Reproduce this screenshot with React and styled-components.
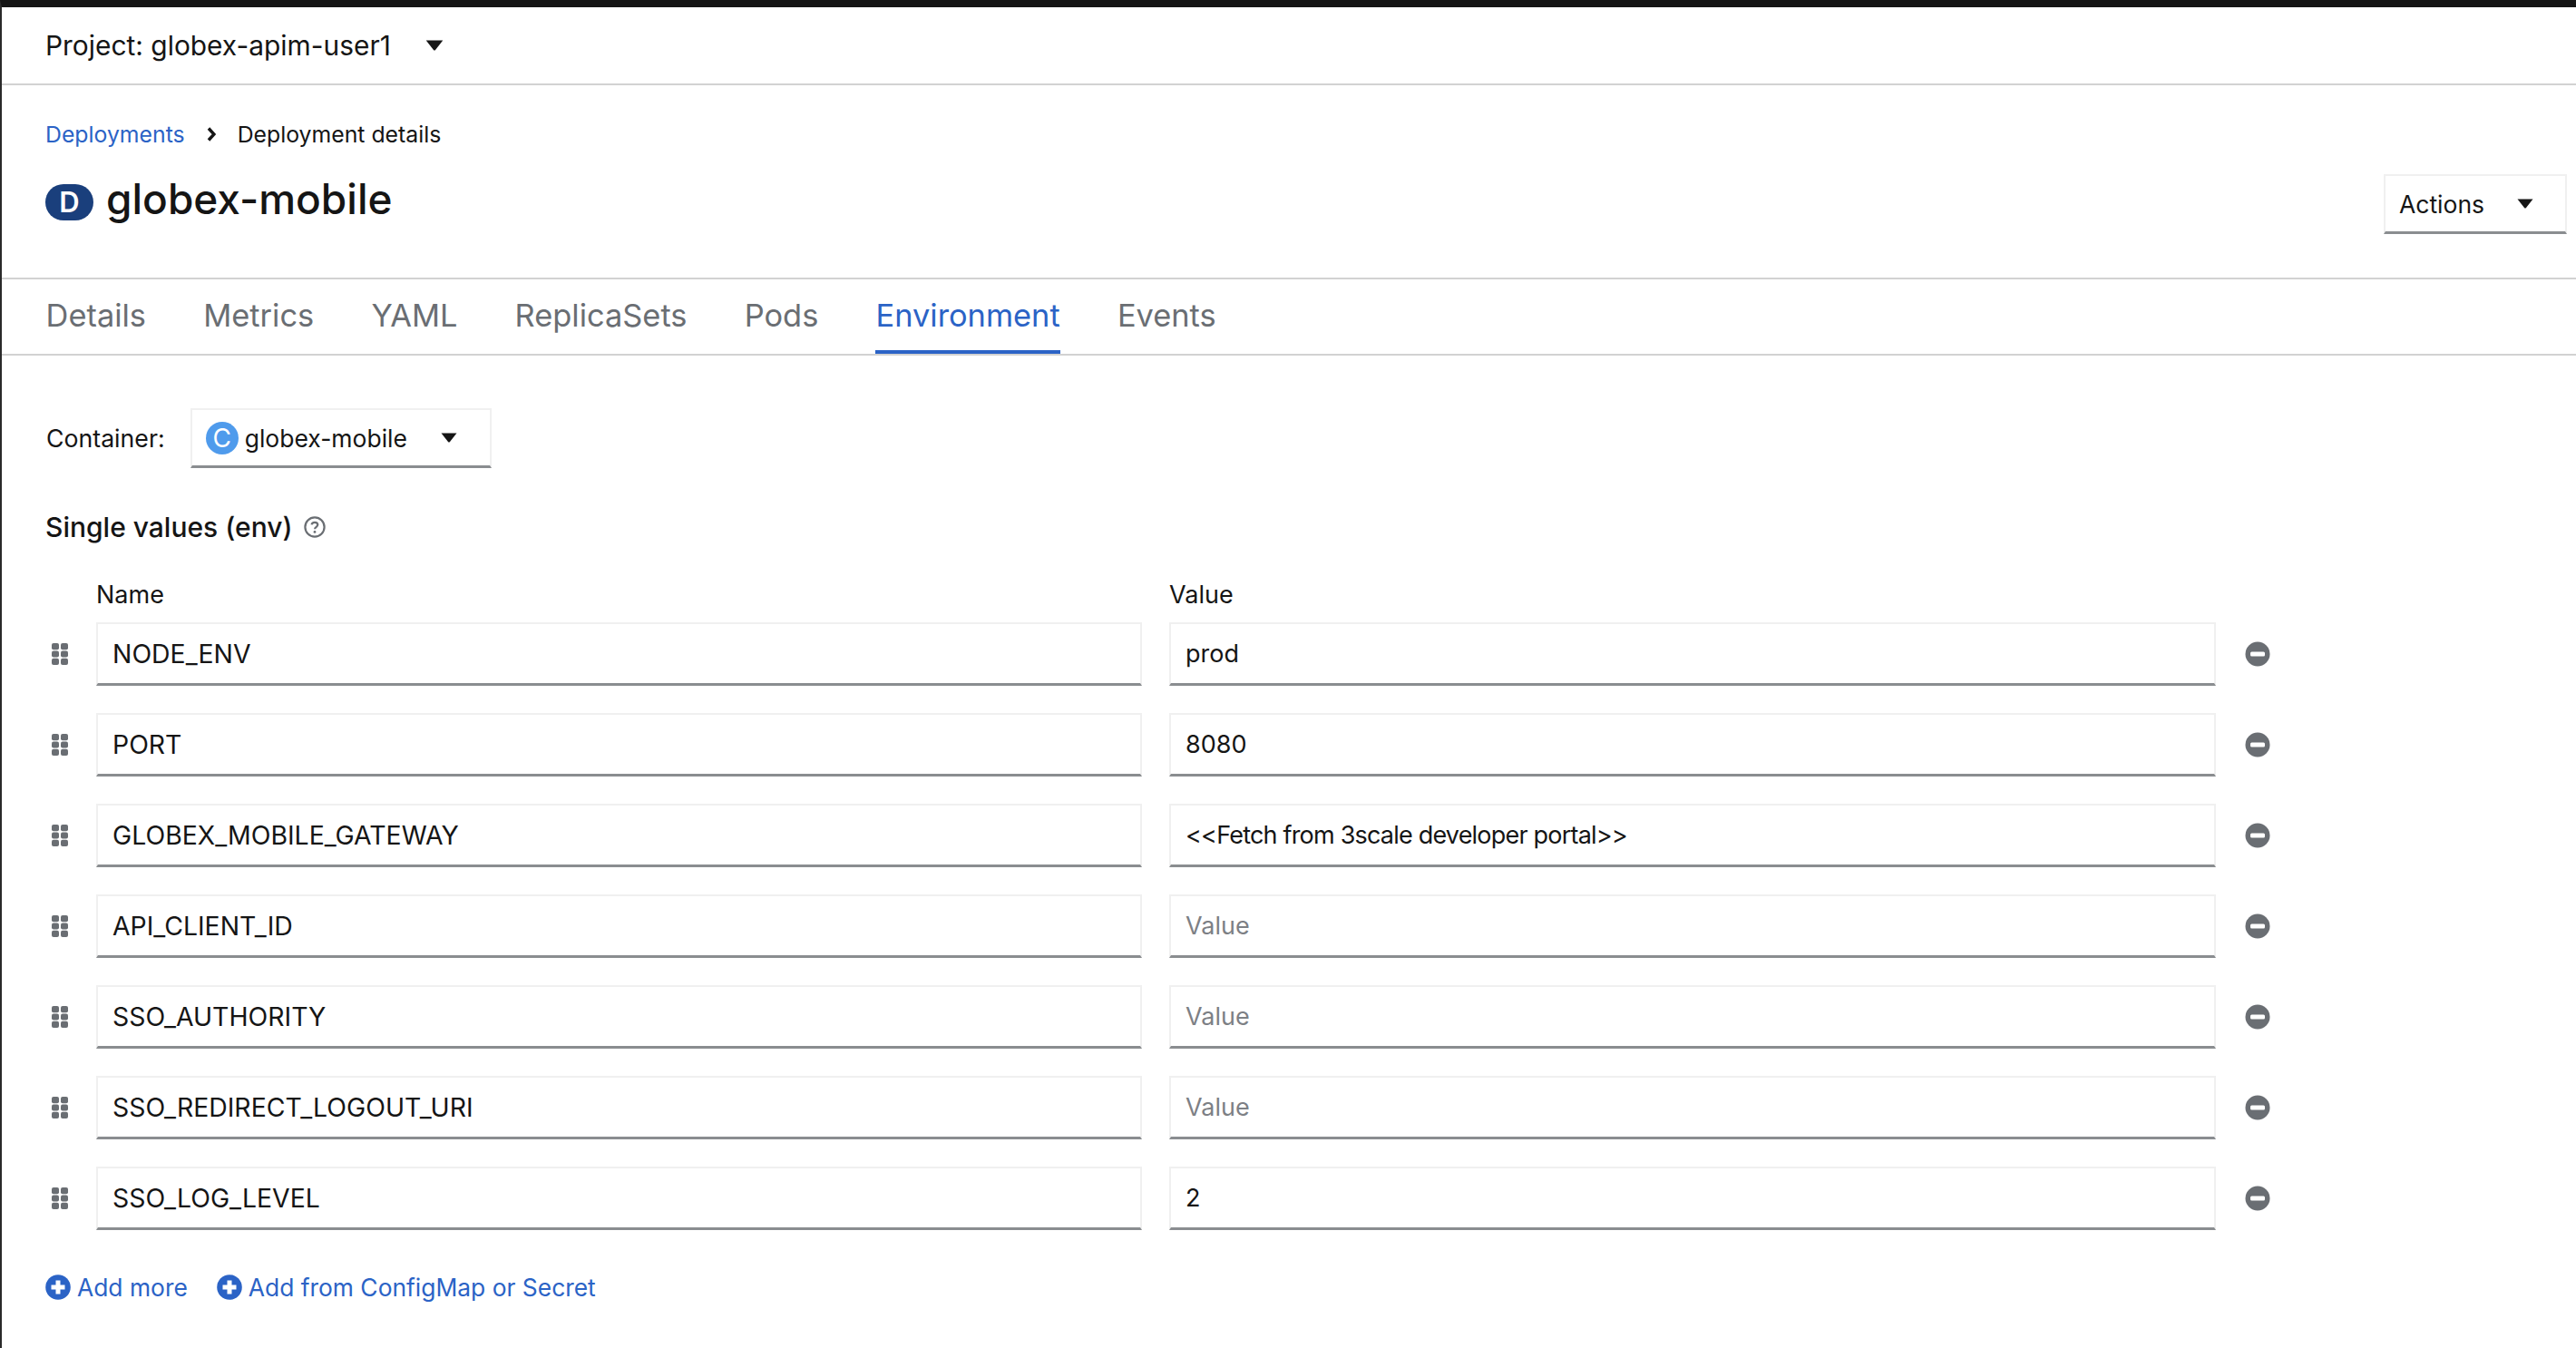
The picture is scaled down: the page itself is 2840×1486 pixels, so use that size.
import React from "react";
import styled, { createGlobalStyle } from "styled-components";

const GlobalStyle = createGlobalStyle`
  html, body {
    margin: 0;
    padding: 0;
    background: #fff;
    color: #151515;
    font-family: "Inter", "Liberation Sans", sans-serif;
  }
  * {
    box-sizing: border-box;
  }
`;

const blue = "#2b63c6";
const gray = "#6a6e73";

const Page = styled.div`
  width: 2840px;
  height: 1486px;
  overflow: hidden;
  border-top: 8px solid #151515;
  border-left: 2px solid #2a2a2a;
  background: #fff;
`;

const ProjectBar = styled.div`
  height: 86px;
  display: flex;
  align-items: center;
  padding-left: 48px;
  border-bottom: 2px solid #d2d2d2;
  font-size: 29.9px;
`;

const ProjectCaret = styled.span`
  margin-left: 38px;
  display: flex;
`;

const Header = styled.div`
  height: 214px;
  padding: 37px 10px 0 48px;
  display: flex;
  justify-content: space-between;
  border-bottom: 2px solid #d2d2d2;
`;

const Breadcrumb = styled.div`
  height: 34px;
  display: flex;
  align-items: center;
  font-size: 24.8px;
`;

const CrumbLink = styled.a`
  color: ${blue};
`;

const CrumbSep = styled.span`
  display: flex;
  margin: 0 24px;
`;

const TitleRow = styled.div`
  display: flex;
  align-items: center;
  margin-top: 24px;
  gap: 14px;
`;

const Badge = styled.span`
  width: 53px;
  height: 40px;
  margin-top: 7px;
  border-radius: 20px;
  background: ${(p) => p.$bg};
  color: #fff;
  display: flex;
  align-items: center;
  justify-content: center;
  font-size: 31px;
  font-weight: 600;
`;

const Title = styled.h1`
  margin: 0;
  font-size: 46px;
  font-weight: 500;
  line-height: 60px;
`;

const SelectButton = styled.button`
  display: flex;
  align-items: center;
  justify-content: space-between;
  width: ${(p) => p.$width}px;
  height: ${(p) => p.$height}px;
  padding: ${(p) => p.$padding};
  background: #fff;
  color: #151515;
  border: 2px solid #f0f0f0;
  border-bottom: 3px solid #8a8d90;
  font-family: inherit;
  font-size: 26.5px;
`;

const ActionsButton = styled(SelectButton)`
  margin-top: 61px;
`;

const Tabs = styled.div`
  height: 84px;
  padding-left: 17px;
  display: flex;
  border-bottom: 2px solid #d2d2d2;
`;

const Tab = styled.a`
  height: 82px;
  margin: 0 31.6px;
  display: flex;
  align-items: center;
  font-size: 34.4px;
  color: ${(p) => (p.$active ? blue : gray)};
  border-bottom: 4px solid ${(p) => (p.$active ? blue : "transparent")};
`;

const Content = styled.div`
  padding: 58px 0 0 49px;
`;

const ContainerRow = styled.div`
  display: flex;
  align-items: center;
  gap: 28px;
  font-size: 26.7px;
`;

const SelectValue = styled.span`
  display: flex;
  align-items: center;
  gap: 7px;
`;

const CircleBadge = styled.span`
  width: 36px;
  height: 36px;
  border-radius: 50%;
  background: #4f9bec;
  color: #fff;
  display: flex;
  align-items: center;
  justify-content: center;
  font-size: 28px;
`;

const SectionTitle = styled.h2`
  margin: 47px 0 0 -1px;
  height: 36px;
  display: flex;
  align-items: center;
  gap: 12px;
  font-size: 30px;
  font-weight: 500;
`;

const Form = styled.div`
  margin-top: 39px;
  display: grid;
  grid-template-columns: 55px 1153px 1184px 92px;
  row-gap: 30px;
  align-items: center;
`;

const ColumnLabel = styled.div`
  font-size: 27px;
  height: 34px;
  margin-bottom: -16px;
  display: flex;
  align-items: center;
`;

const ValueCell = styled.div`
  padding-left: 30px;
`;

const DragHandle = styled.span`
  display: flex;
  padding-left: 6px;
`;

const Field = styled.input`
  display: block;
  width: 100%;
  height: 70px;
  padding: 0 16px;
  background: #fff;
  color: #151515;
  border: 2px solid #f0f0f0;
  border-bottom: 3px solid #8a8d90;
  outline: none;
  font-family: inherit;
  font-size: 27px;

  &::placeholder {
    color: #7d8085;
    opacity: 1;
  }
`;

const NameField = styled(Field)`
  font-size: 28.4px;
`;

const ValueField = styled(Field)`
  letter-spacing: ${(p) => (p.$tight ? "-0.8px" : "0")};
`;

const RemoveCell = styled.span`
  display: flex;
  padding-left: 32px;
`;

const AddRow = styled.div`
  margin-top: 47px;
  margin-left: -1px;
  display: flex;
  gap: 32px;
`;

const AddLink = styled.a`
  display: flex;
  align-items: center;
  gap: 7px;
  color: ${blue};
  font-size: 26.4px;
`;

const Caret = ({ w = 18, h = 11, color = "#151515" }) => (
  <svg width={w} height={h} viewBox="0 0 18 11">
    <path d="M0.5 0.5H17.5L9.8 10.2Q9 11 8.2 10.2Z" fill={color} />
  </svg>
);

const Chevron = () => (
  <svg width="10" height="16" viewBox="0 0 10 16">
    <path d="M2 1.5L8 8L2 14.5" fill="none" stroke="#151515" strokeWidth="3.4" />
  </svg>
);

const HelpIcon = () => (
  <svg width="24" height="24" viewBox="0 0 24 24" fill="none">
    <circle cx="12" cy="12" r="10.6" stroke={gray} strokeWidth="2.2" />
    <path d="M8.6 9.4C8.8 7.6 10.2 6.8 12 6.8C13.9 6.8 15.3 7.9 15.3 9.6C15.3 11.8 12.1 11.9 12.1 14.3" stroke={gray} strokeWidth="2.2" />
    <circle cx="12" cy="17.4" r="1.4" fill={gray} />
  </svg>
);

const GripIcon = () => (
  <svg width="18" height="24" viewBox="0 0 18 24" fill={gray}>
    {[0, 8.4, 16.8].map((y) =>
      [0, 10].map((x) => <rect key={`${x}-${y}`} x={x} y={y} width="8" height="7.2" rx="2" />)
    )}
  </svg>
);

const MinusCircle = () => (
  <svg width="28" height="28" viewBox="0 0 28 28">
    <circle cx="14" cy="14" r="13.5" fill={gray} />
    <rect x="6" y="11.5" width="16" height="5" rx="1.5" fill="#fff" />
  </svg>
);

const PlusCircle = () => (
  <svg width="28" height="28" viewBox="0 0 28 28">
    <circle cx="14" cy="14" r="13.8" fill={blue} />
    <path d="M11.5 6.5H16.5V11.5H21.5V16.5H16.5V21.5H11.5V16.5H6.5V11.5H11.5Z" fill="#fff" />
  </svg>
);

const rows = [
  ["NODE_ENV", "prod"],
  ["PORT", "8080"],
  ["GLOBEX_MOBILE_GATEWAY", "<<Fetch from 3scale developer portal>>"],
  ["API_CLIENT_ID", ""],
  ["SSO_AUTHORITY", ""],
  ["SSO_REDIRECT_LOGOUT_URI", ""],
  ["SSO_LOG_LEVEL", "2"],
];

const tabs = ["Details", "Metrics", "YAML", "ReplicaSets", "Pods", "Environment", "Events"];

export default function App() {
  return (
    <Page>
      <GlobalStyle />
      <ProjectBar>
        Project: globex-apim-user1
        <ProjectCaret>
          <Caret w={20} h={12} />
        </ProjectCaret>
      </ProjectBar>

      <Header>
        <div>
          <Breadcrumb>
            <CrumbLink>Deployments</CrumbLink>
            <CrumbSep>
              <Chevron />
            </CrumbSep>
            Deployment details
          </Breadcrumb>
          <TitleRow>
            <Badge $bg="#1a3f7c">D</Badge>
            <Title>globex-mobile</Title>
          </TitleRow>
        </div>
        <ActionsButton $width={202} $height={66} $padding="0 35px 0 15px">
          Actions
          <Caret />
        </ActionsButton>
      </Header>

      <Tabs>
        {tabs.map((t) => (
          <Tab key={t} $active={t === "Environment"}>
            {t}
          </Tab>
        ))}
      </Tabs>

      <Content>
        <ContainerRow>
          Container:
          <SelectButton $width={332} $height={66} $padding="0 36px 0 15px">
            <SelectValue>
              <CircleBadge>C</CircleBadge>
              globex-mobile
            </SelectValue>
            <Caret />
          </SelectButton>
        </ContainerRow>

        <SectionTitle>
          Single values (env)
          <HelpIcon />
        </SectionTitle>

        <Form>
          <span />
          <ColumnLabel>Name</ColumnLabel>
          <ValueCell>
            <ColumnLabel>Value</ColumnLabel>
          </ValueCell>
          <span />
          {rows.map(([name, value]) => (
            <React.Fragment key={name}>
              <DragHandle>
                <GripIcon />
              </DragHandle>
              <NameField readOnly value={name} />
              <ValueCell>
                <ValueField readOnly value={value} placeholder="Value" $tight={value.length > 10} />
              </ValueCell>
              <RemoveCell>
                <MinusCircle />
              </RemoveCell>
            </React.Fragment>
          ))}
        </Form>

        <AddRow>
          <AddLink>
            <PlusCircle />
            Add more
          </AddLink>
          <AddLink>
            <PlusCircle />
            Add from ConfigMap or Secret
          </AddLink>
        </AddRow>
      </Content>
    </Page>
  );
}
